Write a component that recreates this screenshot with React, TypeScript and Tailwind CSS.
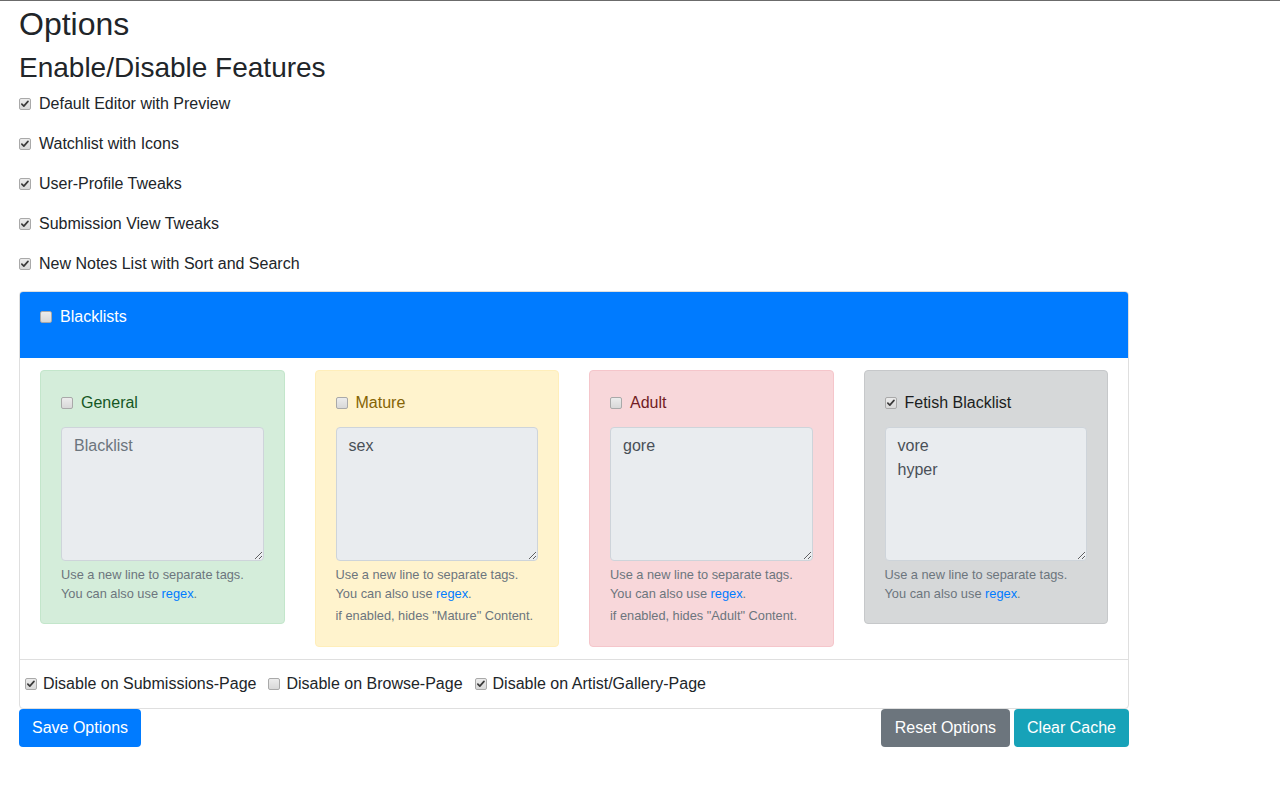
import React from "react";

const features = [
  "Default Editor with Preview",
  "Watchlist with Icons",
  "User-Profile Tweaks",
  "Submission View Tweaks",
  "New Notes List with Sort and Search",
];

type Box = {
  title: string;
  checked: boolean;
  value: string;
  note?: string;
  card: string;
  label: string;
};

const boxes: Box[] = [
  { title: "General", checked: false, value: "", card: "bg-[#d4edda] border-[#c3e6cb]", label: "text-[#155724]" },
  { title: "Mature", checked: false, value: "sex", note: 'if enabled, hides "Mature" Content.', card: "bg-[#fff3cd] border-[#ffeeba]", label: "text-[#856404]" },
  { title: "Adult", checked: false, value: "gore", note: 'if enabled, hides "Adult" Content.', card: "bg-[#f8d7da] border-[#f5c6cb]", label: "text-[#721c24]" },
  { title: "Fetish Blacklist", checked: true, value: "vore\nhyper", card: "bg-[#d6d8d9] border-[#c6c8ca]", label: "text-[#1b1e21]" },
];

function Check({ checked }: { checked: boolean }) {
  return (
    <span className="inline-flex h-[12px] w-[12px] shrink-0 items-center justify-center rounded-[2px] border border-[#a9a9a9] bg-gradient-to-b from-[#ececec] to-[#d8d8d8]">
      {checked && (
        <svg viewBox="0 0 12 12" className="h-[10px] w-[10px]">
          <path d="M2.2 6.2 L4.6 8.6 L9.6 2.8" fill="none" stroke="#3a3a3a" strokeWidth={2} strokeLinecap="round" strokeLinejoin="round" />
        </svg>
      )}
    </span>
  );
}

export default function App() {
  return (
    <div className="min-h-[800px] border-t border-[#6b6b6b] bg-white text-[#212529] [font-family:'Liberation_Sans',Arial,sans-serif]">
      <div className="ml-[19px] w-[1110px] pt-[4px]">
        <h2 className="mb-2 text-[32px] leading-[38px] font-normal">Options</h2>
        <h3 className="mb-[7px] text-[28px] leading-[34px] font-normal">Enable/Disable Features</h3>

        {features.map((f) => (
          <label key={f} className="mb-4 flex h-6 items-center gap-[8px] text-base last-of-type:mb-[15px]">
            <Check checked />
            <span>{f}</span>
          </label>
        ))}

        {/* Blacklists card */}
        <div className="rounded-[4px] border border-[#dfdfdf]">
          <div className="h-[66px] rounded-t-[3px] bg-[#007bff] px-[20px] pt-[13px] text-white">
            <label className="flex h-6 items-center gap-[8px]">
              <Check checked={false} />
              <span>Blacklists</span>
            </label>
          </div>

          <div className="grid grid-cols-4 items-start gap-[30px] px-[20px] py-[12px]">
            {boxes.map((b) => (
              <div key={b.title} className={`rounded-[4px] border p-[20px] ${b.card}`}>
                <label className={`flex h-6 items-center gap-[8px] ${b.label}`}>
                  <Check checked={b.checked} />
                  <span>{b.title}</span>
                </label>
                <textarea
                  readOnly
                  rows={5}
                  defaultValue={b.value}
                  placeholder="Blacklist"
                  className="mt-3 block h-[134px] w-full rounded-[4px] border border-[#ced4da] bg-[#e9ecef] px-3 py-[6px] text-base leading-6 text-[#495057] placeholder:text-[#6c757d] outline-none"
                />
                <div className="mt-1 text-[12.8px] leading-[19.2px] text-[#6c757d]">
                  Use a new line to separate tags.
                  <br />
                  You can also use <a className="text-[#007bff]">regex</a>.
                </div>
                {b.note && (
                  <div className="mt-[3px] text-[12.8px] leading-[19.2px] text-[#6c757d]">{b.note}</div>
                )}
              </div>
            ))}
          </div>

          <div className="flex h-[49px] items-center gap-[12px] border-t border-[#dfdfdf] px-[5px]">
            <label className="flex items-center gap-[6px]">
              <Check checked />
              <span>Disable on Submissions-Page</span>
            </label>
            <label className="flex items-center gap-[6px]">
              <Check checked={false} />
              <span>Disable on Browse-Page</span>
            </label>
            <label className="flex items-center gap-[6px]">
              <Check checked />
              <span>Disable on Artist/Gallery-Page</span>
            </label>
          </div>
        </div>

        <div className="flex items-center">
          <button className="h-[38px] rounded-[4px] bg-[#007bff] px-[13px] text-base text-white">Save Options</button>
          <div className="ml-auto flex gap-1">
            <button className="h-[38px] rounded-[4px] bg-[#6c757d] px-[14px] text-base text-white">Reset Options</button>
            <button className="h-[38px] rounded-[4px] bg-[#17a2b8] px-[13px] text-base text-white">Clear Cache</button>
          </div>
        </div>
      </div>
    </div>
  );
}
